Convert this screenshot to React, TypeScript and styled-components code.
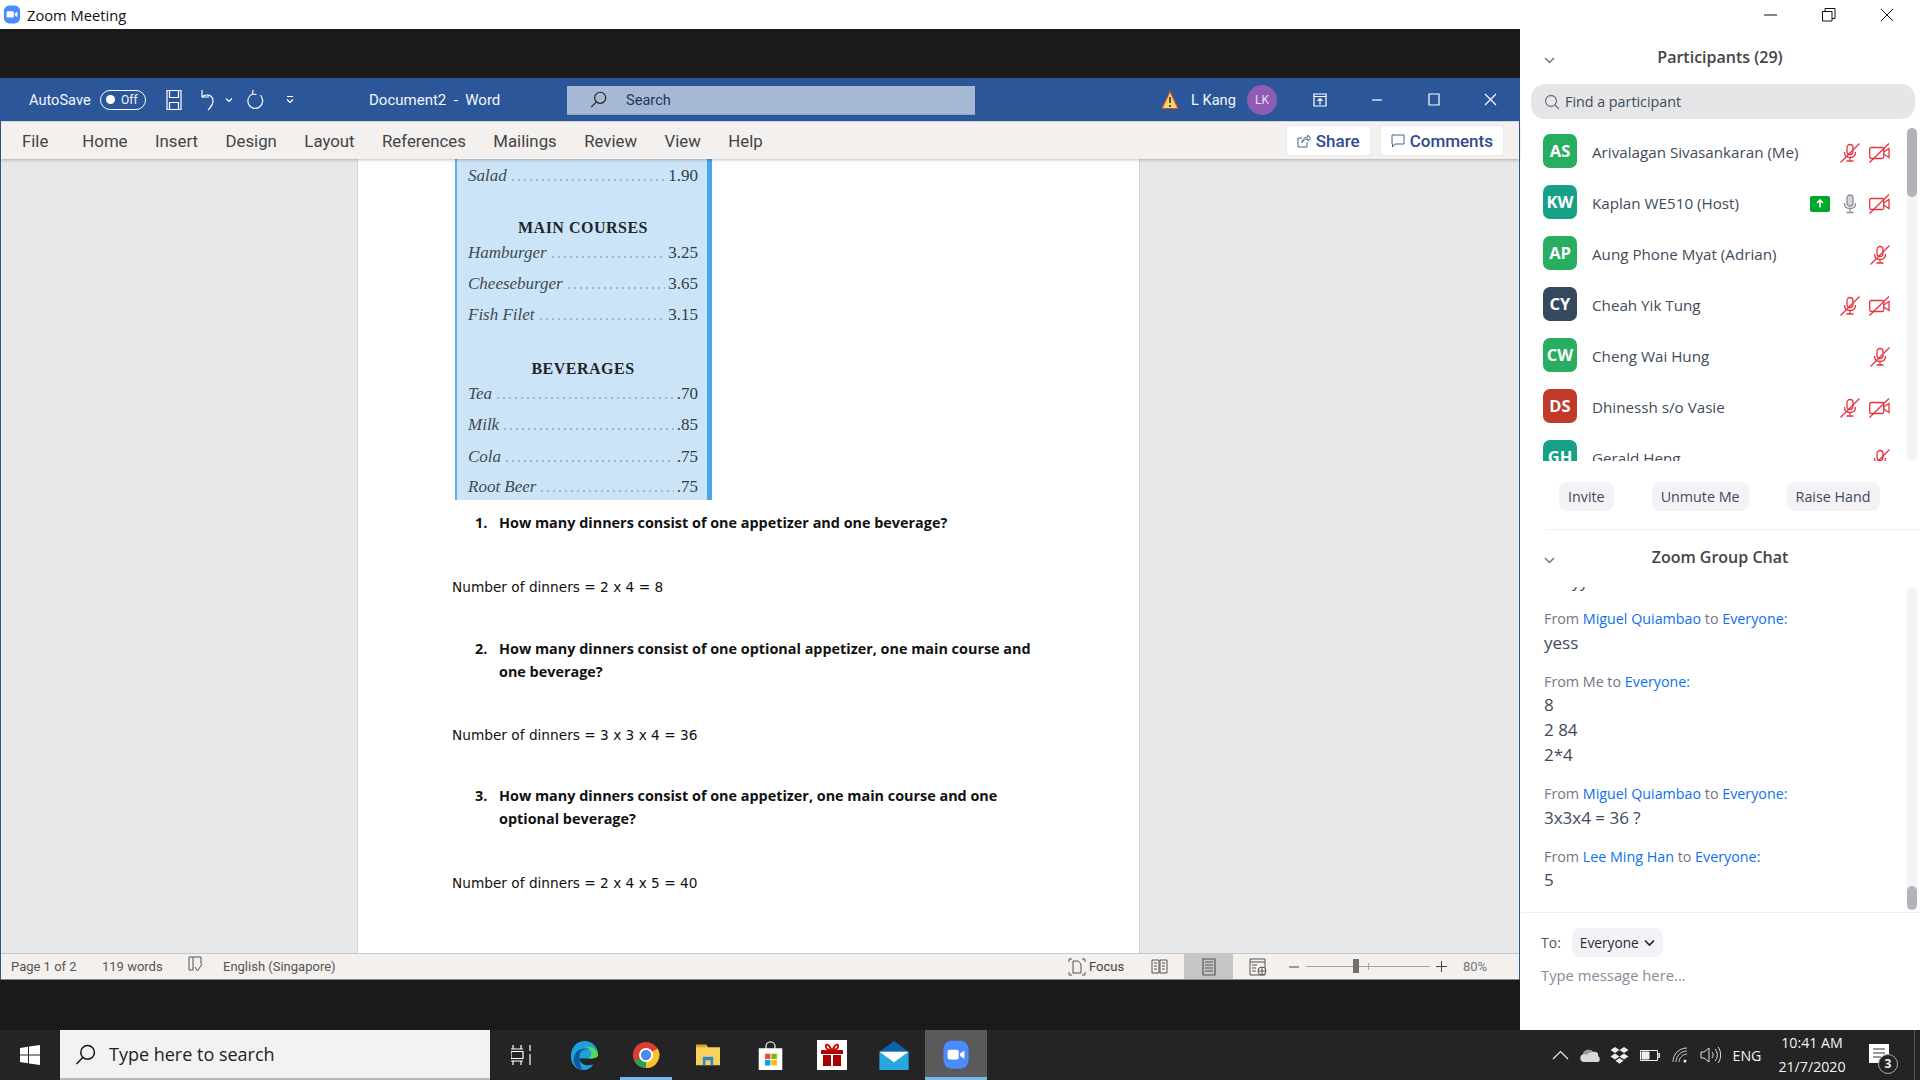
import React from 'react';
import styled, { createGlobalStyle } from 'styled-components';

const GlobalStyle = createGlobalStyle`
  html, body {
    margin: 0;
    padding: 0;
    background: #1a1a1a;
  }
  * { box-sizing: border-box; }
`;

const UI_FONT = `"Open Sans", "Noto Sans", sans-serif`;
const WORD_FONT = `"Roboto", "Open Sans", sans-serif`;
const DOC_FONT = `"DejaVu Sans", Verdana, sans-serif`;
const DOC_BOLD_FONT = `"Open Sans", "Noto Sans", sans-serif`;
const BOOK_FONT = `"Liberation Serif", "Times New Roman", serif`;

const participants = [
  { id: 'AS', name: 'Arivalagan Sivasankaran (Me)', color: '#27ae60', share: false, micOn: false, cam: true },
  { id: 'KW', name: 'Kaplan WE510 (Host)', color: '#16a085', share: true, micOn: true, cam: true },
  { id: 'AP', name: 'Aung Phone Myat (Adrian)', color: '#27ae60', share: false, micOn: false, cam: false },
  { id: 'CY', name: 'Cheah Yik Tung', color: '#34495e', share: false, micOn: false, cam: true },
  { id: 'CW', name: 'Cheng Wai Hung', color: '#27ae60', share: false, micOn: false, cam: false },
  { id: 'DS', name: 'Dhinessh s/o Vasie', color: '#c0392b', share: false, micOn: false, cam: true },
  { id: 'GH', name: 'Gerald Heng', color: '#16a085', share: false, micOn: false, cam: false },
];

const menuTabs = ['File', 'Home', 'Insert', 'Design', 'Layout', 'References', 'Mailings', 'Review', 'View', 'Help'];

const Screen = styled.div`
  width: 1920px;
  height: 1080px;
  display: flex;
  flex-direction: column;
  overflow: hidden;
  background: #1a1a1a;
`;

const TitleBar = styled.header`
  height: 29px;
  background: #fff;
  display: flex;
  align-items: center;
  justify-content: space-between;
  padding-left: 3px;
  flex: none;
`;

const TitleLeft = styled.div`
  display: flex;
  align-items: center;
  gap: 6px;
  font: 14.7px ${UI_FONT};
  color: #111;
`;

const WindowButtons = styled.div`
  display: flex;
  align-items: center;
  height: 29px;
  padding-right: 4px;
`;

const WindowButton = styled.span`
  width: 58px;
  height: 29px;
  display: flex;
  align-items: center;
  justify-content: center;
`;

const Body = styled.div`
  flex: 1;
  display: flex;
  min-height: 0;
`;

const Stage = styled.main`
  width: 1520px;
  padding-top: 49px;
  padding-bottom: 50px;
  background: #1a1a1a;
  display: flex;
  flex-direction: column;
`;

const WordWindow = styled.section`
  height: 902px;
  display: flex;
  flex-direction: column;
  border-left: 1px solid #2b579a;
  border-right: 1px solid #2b579a;
`;

const WordTitle = styled.div`
  height: 43px;
  background: #2b579a;
  color: #f4f6fa;
  display: flex;
  align-items: center;
  font: 14.6px ${WORD_FONT};
  padding-left: 28px;
  flex: none;
`;

const AutoSave = styled.span`
  width: 71px;
`;

const Toggle = styled.span`
  width: 46px;
  height: 20px;
  border: 1px solid #fff;
  border-radius: 10px;
  display: flex;
  align-items: center;
  padding-left: 5px;
  gap: 6px;
  font-size: 12px;
  margin-right: 20px;
  &::before {
    content: '';
    width: 9px;
    height: 9px;
    border-radius: 50%;
    background: #fff;
  }
`;

const QuickIcon = styled.span<{ $w: number }>`
  width: ${(p) => p.$w}px;
  height: 30px;
  display: flex;
  align-items: center;
  flex: none;
`;

const DocName = styled.span`
  margin-left: 74px;
  width: 198px;
  font-size: 15px;
  white-space: pre;
`;

const WordSearch = styled.div`
  width: 408px;
  height: 29px;
  margin-top: 1px;
  background: #a5b8d4;
  border-bottom: 1px solid #8ea6c8;
  color: #26375a;
  display: flex;
  align-items: center;
  gap: 19px;
  padding-left: 23px;
`;

const UserArea = styled.div`
  margin-left: auto;
  display: flex;
  align-items: center;
  height: 100%;
`;

const UserName = styled.span`
  margin-left: 12px;
  width: 46px;
  white-space: nowrap;
`;

const UserBadge = styled.span`
  margin: 0 14px 0 10px;
  width: 30px;
  height: 30px;
  border-radius: 50%;
  background: #8e5bb5;
  color: #e8def0;
  font-size: 12px;
  display: flex;
  align-items: center;
  justify-content: center;
`;

const WordControl = styled.span`
  width: 57px;
  height: 43px;
  display: flex;
  align-items: center;
  justify-content: center;
`;

const Ribbon = styled.nav`
  height: 38px;
  background: #f3f0ee;
  border-top: 1px solid #d0d4dc;
  display: flex;
  align-items: center;
  padding-left: 21px;
  box-shadow: 0 1px 3px rgba(0, 0, 0, 0.25);
  position: relative;
  z-index: 1;
  flex: none;
`;

const Tab = styled.span`
  font: 16.8px ${WORD_FONT};
  color: #444;
  margin-right: 27.5px;
  &:first-child {
    margin-right: 34px;
  }
`;

const RibbonActions = styled.div`
  margin-left: auto;
  display: flex;
  gap: 11px;
  padding-right: 16px;
`;

const RibbonButton = styled.span`
  height: 29px;
  background: #fff;
  border-radius: 2px;
  box-shadow: 0 0 1px rgba(0, 0, 0, 0.25);
  color: #2f4a8f;
  font: 500 17px ${WORD_FONT};
  display: flex;
  align-items: center;
  gap: 5px;
  padding: 0 10px;
`;

const Canvas = styled.div`
  flex: 1;
  min-height: 0;
  background: #e6e7e9;
  display: flex;
  justify-content: flex-start;
  padding-left: 356px;
`;

const Page = styled.article`
  width: 783px;
  height: 100%;
  background: #fff;
  border-left: 1px solid #d5d5d5;
  border-right: 1px solid #d5d5d5;
  padding-left: 94px;
  overflow: hidden;
`;

const MenuCard = styled.div`
  width: 257px;
  height: 341px;
  margin-left: 3px;
  background: #cce4f7;
  border-left: 2px solid #62ade8;
  border-right: 5px solid #4aa5e8;
  padding: 0 9px 0 11px;
  display: flex;
  flex-direction: column;
`;

const MenuRow = styled.div<{ $top: number }>`
  display: flex;
  align-items: baseline;
  margin-top: ${(p) => p.$top}px;
  height: 20px;
  line-height: 20px;
  font: italic 17px ${BOOK_FONT};
  color: #3f4a55;
`;

const Leader = styled.span`
  flex: 1;
  margin: 0 3px;
  height: 2px;
  background-image: radial-gradient(circle, #a5b4c2 0.7px, transparent 1px);
  background-size: 6px 2px;
  background-repeat: repeat-x;
`;

const Price = styled.span`
  font-style: normal;
  color: #333c45;
`;

const MenuHeading = styled.div<{ $top: number }>`
  margin-top: ${(p) => p.$top}px;
  height: 20px;
  line-height: 20px;
  text-align: center;
  font: bold 16px ${BOOK_FONT};
  letter-spacing: 0.5px;
  color: #22262b;
`;

const Question = styled.div<{ $top: number }>`
  width: 580px;
  margin-top: ${(p) => p.$top}px;
  padding-left: 47px;
  position: relative;
  font: 700 14.4px/23px ${DOC_BOLD_FONT};
  color: #111;
`;

const QuestionNumber = styled.span`
  position: absolute;
  left: 23px;
  top: 0;
`;

const Answer = styled.div<{ $top: number }>`
  margin-top: ${(p) => p.$top}px;
  font: 13.7px/23px ${DOC_FONT};
  color: #111;
`;

const StatusBar = styled.footer`
  height: 27px;
  background: #f3f0ee;
  border-top: 1px solid #c8c8c8;
  border-bottom: 1px solid #888;
  display: flex;
  align-items: center;
  padding-left: 10px;
  font: 13px ${WORD_FONT};
  color: #555;
  flex: none;
`;

const StatusText = styled.span<{ $w: number }>`
  width: ${(p) => p.$w}px;
  white-space: nowrap;
`;

const StatusRight = styled.div`
  margin-left: auto;
  display: flex;
  align-items: center;
  height: 100%;
`;

const FocusGroup = styled.span`
  display: flex;
  align-items: center;
  gap: 3px;
  width: 67px;
  color: #444;
`;

const ViewButton = styled.span<{ $active?: boolean }>`
  width: 49px;
  height: 100%;
  display: flex;
  align-items: center;
  justify-content: center;
  background: ${(p) => (p.$active ? '#c8c6c4' : 'transparent')};
`;

const ZoomMinus = styled.svg`
  margin-left: 6px;
`;

const ZoomSlider = styled.span`
  width: 124px;
  height: 1px;
  margin: 0 6px;
  background: #a5a5a5;
  position: relative;
`;

const ZoomThumb = styled.span`
  position: absolute;
  left: 47px;
  top: -7px;
  width: 6px;
  height: 14px;
  background: #707070;
`;

const ZoomTick = styled.span`
  position: absolute;
  left: 62px;
  top: -3px;
  width: 1px;
  height: 7px;
  background: #a5a5a5;
`;

const ZoomValue = styled.span`
  width: 44px;
  text-align: center;
  margin-left: 6px;
  margin-right: 22px;
  color: #777;
`;

const Panel = styled.aside`
  width: 400px;
  background: #fff;
  display: flex;
  flex-direction: column;
  font-family: ${UI_FONT};
`;

const SectionHead = styled.div<{ $h: number; $gap: number }>`
  height: ${(p) => p.$h}px;
  margin-bottom: ${(p) => p.$gap}px;
  flex: none;
  position: relative;
  display: flex;
  align-items: center;
  justify-content: center;
  font-weight: 600;
  font-size: 16px;
  color: #444;
`;

const HeadChevron = styled.span`
  position: absolute;
  left: 23px;
  top: 50%;
  margin-top: -7px;
  height: 14px;
`;

const FindBox = styled.div`
  height: 35px;
  flex: none;
  margin: 0 5px 0 11px;
  background: #e6e6e8;
  border-radius: 14px;
  display: flex;
  align-items: center;
  gap: 5px;
  padding-left: 13px;
  font-size: 14.3px;
  color: #3e4a5c;
`;

const ScrollArea = styled.div<{ $h: number }>`
  height: ${(p) => p.$h}px;
  flex: none;
  position: relative;
  overflow: hidden;
`;

const ListInner = styled.div`
  padding: 6px 0 0 23px;
`;

const Row = styled.div`
  height: 51px;
  display: flex;
  align-items: center;
  padding-right: 30px;
`;

const Avatar = styled.span<{ $bg: string }>`
  width: 34px;
  height: 34px;
  border-radius: 7px;
  background: ${(p) => p.$bg};
  color: #fff;
  font-weight: 700;
  font-size: 16.5px;
  display: flex;
  align-items: center;
  justify-content: center;
  flex: none;
`;

const PersonName = styled.span`
  margin-left: 15px;
  padding-top: 3px;
  font-size: 15.2px;
  color: #414b5a;
  white-space: nowrap;
`;

const RowIcons = styled.span`
  margin-left: auto;
  padding-top: 4px;
  display: flex;
  align-items: center;
  gap: 9px;
`;

const ShareTag = styled.span`
  width: 20px;
  height: 16px;
  margin-right: 1px;
  background: #00a82d;
  border-radius: 2px;
  display: flex;
  align-items: center;
  justify-content: center;
`;

const ScrollTrack = styled.div<{ $right: number; $top: number; $bottom: number }>`
  position: absolute;
  right: ${(p) => p.$right}px;
  top: ${(p) => p.$top}px;
  bottom: ${(p) => p.$bottom}px;
  width: 10px;
  background: #f4f4f7;
  border-radius: 5px;
`;

const ScrollThumb = styled.div<{ $top: number; $h: number }>`
  position: absolute;
  left: 0;
  top: ${(p) => p.$top}px;
  width: 10px;
  height: ${(p) => p.$h}px;
  background: #b2b2ba;
  border-radius: 5px;
`;

const ActionRow = styled.div`
  height: 68px;
  flex: none;
  display: flex;
  align-items: flex-start;
  padding: 21px 0 0 39px;
  gap: 38px;
`;

const ActionButton = styled.span`
  height: 29px;
  padding: 0 9px;
  background: #f2f2f7;
  border-radius: 8px;
  font-size: 14.3px;
  color: #3e4a5c;
  display: flex;
  align-items: center;
`;

const Divider = styled.div<{ $left: number }>`
  height: 1px;
  flex: none;
  margin-left: ${(p) => p.$left}px;
  background: #ececf2;
`;

const ChatInner = styled.div`
  padding-left: 24px;
  margin-top: -17px;
`;

const ClippedLine = styled.div`
  font-size: 16px;
  line-height: 22px;
  height: 28px;
  padding-left: 28px;
  color: #444;
`;

const ChatBlock = styled.div`
  margin-top: 9px;
  padding-bottom: 4.5px;
`;

const ChatMeta = styled.div`
  line-height: 24px;
  color: #747487;
  font-size: 14.3px;
`;

const ChatName = styled.span`
  color: #0e71eb;
`;

const ChatLine = styled.div`
  font-size: 17px;
  line-height: 25px;
  color: #3e4a5c;
  position: relative;
  top: -1.5px;
`;

const ToRow = styled.div`
  display: flex;
  align-items: center;
  gap: 11px;
  padding: 15px 0 0 21px;
  font-size: 14px;
  color: #4a5564;
`;

const ToSelect = styled.span`
  height: 29px;
  padding: 0 8px;
  background: #f2f2f7;
  border-radius: 8px;
  display: flex;
  align-items: center;
  gap: 5px;
  font-size: 13.7px;
  color: #222b3a;
`;

const Composer = styled.div`
  padding: 7px 0 0 21px;
  font-size: 14.8px;
  line-height: 22px;
  color: #8a8a98;
`;

const Taskbar = styled.footer`
  height: 50px;
  flex: none;
  background: #242424;
  display: flex;
  align-items: center;
`;

const StartButton = styled.span`
  width: 60px;
  height: 50px;
  display: flex;
  align-items: center;
  justify-content: center;
`;

const TaskSearch = styled.div`
  width: 430px;
  height: 50px;
  background: #f2f2f2;
  border-bottom: 2px solid #b8b8b8;
  display: flex;
  align-items: center;
  gap: 13px;
  padding-left: 15px;
  font: 18px ${UI_FONT};
  color: #222;
`;

const TaskIcon = styled.span<{ $active?: boolean; $running?: boolean; $w?: number }>`
  width: ${(p) => p.$w ?? 62}px;
  height: 50px;
  display: flex;
  align-items: center;
  justify-content: center;
  position: relative;
  background: ${(p) => (p.$active ? '#5a5a5a' : 'transparent')};
  ${(p) =>
    p.$running
      ? `&::after {
    content: '';
    position: absolute;
    left: ${p.$active ? 0 : 5}px;
    right: ${p.$active ? 0 : 5}px;
    bottom: 0;
    height: 3px;
    background: #76b9ed;
  }`
      : ''}
`;

const Tray = styled.div`
  margin-left: auto;
  display: flex;
  align-items: center;
  height: 100%;
  color: #f2f2f2;
  font: 14.2px ${UI_FONT};
`;

const TrayIcon = styled.span<{ $w: number }>`
  width: ${(p) => p.$w}px;
  height: 50px;
  display: flex;
  align-items: center;
  justify-content: center;
`;

const Clock = styled.span`
  width: 90px;
  text-align: center;
  line-height: 24px;
  white-space: nowrap;
`;

const NotifyWrap = styled.span`
  width: 57px;
  height: 50px;
  padding-left: 12px;
  display: flex;
  align-items: center;
  position: relative;
`;

const NotifyCount = styled.span`
  position: absolute;
  left: 21px;
  top: 24px;
  width: 20px;
  height: 20px;
  border-radius: 50%;
  border: 1px solid #aaa;
  background: #242424;
  color: #eee;
  font: bold 12px/18px ${UI_FONT};
  text-align: center;
`;

const ShowDesktop = styled.span`
  width: 6px;
  height: 50px;
  border-left: 1px solid #555;
`;

const ZoomGlyph = ({ size }: { size: number }) => (
  <svg width={size} height={size * 1.05} viewBox="0 0 20 21">
    <rect x="1" y="0.5" width="18" height="20" rx="6" fill="#4a8cff" />
    <rect x="4" y="7" width="8" height="7" rx="1.5" fill="#fff" />
    <path d="M13 9.5 16 7.5v6l-3-2z" fill="#fff" />
  </svg>
);

const MicOff = () => (
  <svg width="20" height="20" viewBox="0 0 20 20" fill="none" stroke="#e8333f" strokeWidth="1.3">
    <rect x="7" y="1.5" width="6" height="10" rx="3" />
    <path d="M4.5 9c0 3.5 2.4 5.5 5.5 5.5s5.5-2 5.5-5.5M10 14.5v3M6.5 18h7" />
    <path d="M0.5 19.5 19.5 0.5" />
  </svg>
);

const MicOn = () => (
  <svg width="20" height="20" viewBox="0 0 20 20" fill="none" stroke="#8b8b95" strokeWidth="1.3">
    <rect x="7" y="1" width="6" height="11" rx="3" fill="#d6d6da" />
    <path d="M4.5 9c0 3.5 2.4 5.5 5.5 5.5s5.5-2 5.5-5.5M10 14.5v3M6.5 18.5h7" />
  </svg>
);

const CamOff = () => (
  <svg width="21" height="20" viewBox="0 0 21 20" fill="none" stroke="#e8333f" strokeWidth="1.3">
    <rect x="0.7" y="4.5" width="14" height="11" rx="1.5" />
    <path d="M14.7 9 20 5.5v9L14.7 11" />
    <path d="M0.5 19.5 20 0.5" />
  </svg>
);

const Chevron = ({ color = '#6e7680' }: { color?: string }) => (
  <svg width="13" height="14" viewBox="0 0 13 14" fill="none" stroke={color} strokeWidth="1.5">
    <path d="M2 5l4.5 4.5L11 5" />
  </svg>
);

const WordIcon = ({ d, w = 20, h = 22 }: { d: string; w?: number; h?: number }) => (
  <svg width={w} height={h} viewBox={`0 0 ${w} ${h}`} fill="none" stroke="#fff" strokeWidth="1.2">
    <path d={d} />
  </svg>
);

const StatusIcon = ({ children, w = 18, h = 18 }: { children: React.ReactNode; w?: number; h?: number }) => (
  <svg width={w} height={h} viewBox={`0 0 ${w} ${h}`} fill="none" stroke="#555" strokeWidth="1">
    {children}
  </svg>
);

const SearchGlyph = ({ size, color }: { size: number; color: string }) => (
  <svg width={size} height={size} viewBox="0 0 20 20" fill="none" stroke={color} strokeWidth="1.4">
    <circle cx="12" cy="8" r="6.5" />
    <path d="M7.5 12.7 1.5 19" />
  </svg>
);

const MenuItem = ({ name, price, top }: { name: string; price: string; top: number }) => (
  <MenuRow $top={top}>
    {name}
    <Leader />
    <Price>{price}</Price>
  </MenuRow>
);

export default function App() {
  return (
    <Screen>
      <GlobalStyle />
      <TitleBar>
        <TitleLeft>
          <ZoomGlyph size={18} />
          Zoom Meeting
        </TitleLeft>
        <WindowButtons>
          <WindowButton>
            <svg width="14" height="2"><path d="M0 1h13" stroke="#111" /></svg>
          </WindowButton>
          <WindowButton>
            <svg width="14" height="14" fill="none" stroke="#111"><path d="M.5 3.5h9.5v9.5H.5zM3 3.5V.5h10v10h-3" /></svg>
          </WindowButton>
          <WindowButton>
            <svg width="14" height="14" fill="none" stroke="#111"><path d="M1 1l12 12M13 1 1 13" /></svg>
          </WindowButton>
        </WindowButtons>
      </TitleBar>
      <Body>
        <Stage>
          <WordWindow>
            <WordTitle>
              <AutoSave>AutoSave</AutoSave>
              <Toggle>Off</Toggle>
              <QuickIcon $w={34}>
                <WordIcon w={16} h={22} d="M1 1.5h14v19H1zM3.5 1.5v7h9v-7M3.5 20.5v-7h9v7" />
              </QuickIcon>
              <QuickIcon $w={25}>
                <WordIcon w={16} h={22} d="M2 1v7h7M2 8c3-3 10-3 11 3 .5 4-2 7-5 10" />
              </QuickIcon>
              <QuickIcon $w={22}>
                <WordIcon w={8} h={6} d="M1 1.5l3 3 3-3" />
              </QuickIcon>
              <QuickIcon $w={38}>
                <WordIcon w={18} h={22} d="M6 1l-.5 4 4 .5M5.5 5C1.5 7 0 11 1.5 15s7 6 11 3 4-8 1-12" />
              </QuickIcon>
              <QuickIcon $w={10}>
                <WordIcon w={10} h={10} d="M2 1.5h6M2 4.5l3 3 3-3" />
              </QuickIcon>
              <DocName>Document2  -  Word</DocName>
              <WordSearch>
                <SearchGlyph size={17} color="#222" />
                Search
              </WordSearch>
              <UserArea>
                <svg width="18" height="20" viewBox="0 0 18 20">
                  <path d="M9 1.5 17 18.5H1z" fill="#f8d66a" stroke="#c3503a" strokeWidth="1.2" />
                  <path d="M9 7v6M9 15v2" stroke="#222" strokeWidth="1.5" />
                </svg>
                <UserName>L Kang</UserName>
                <UserBadge>LK</UserBadge>
                <WordControl>
                  <WordIcon w={14} h={14} d="M1 1h12v12H1zM1 3.5h12M7 11.5v-6M4.5 8 7 5.5 9.5 8" />
                </WordControl>
                <WordControl>
                  <WordIcon w={12} h={2} d="M1 1h10" />
                </WordControl>
                <WordControl>
                  <WordIcon w={12} h={13} d="M1 1h10v11H1z" />
                </WordControl>
                <WordControl>
                  <WordIcon w={13} h={13} d="M1 1l11 11M12 1 1 12" />
                </WordControl>
              </UserArea>
            </WordTitle>
            <Ribbon>
              {menuTabs.map((t) => (
                <Tab key={t}>{t}</Tab>
              ))}
              <RibbonActions>
                <RibbonButton>
                  <svg width="14" height="14" viewBox="0 0 14 14" fill="none" stroke="#4a6390">
                    <path d="M5 4H1v9h9V8M5 9c0-4 3-6 6-6V1l2.5 3L11 7V5C8 5 6 6 5 9z" />
                  </svg>
                  Share
                </RibbonButton>
                <RibbonButton>
                  <svg width="14" height="14" viewBox="0 0 14 14" fill="none" stroke="#4a6390">
                    <path d="M1 1h12v9H4l-2.5 3v-3H1z" />
                  </svg>
                  Comments
                </RibbonButton>
              </RibbonActions>
            </Ribbon>
            <Canvas>
              <Page>
                <MenuCard>
                  <MenuItem name="Salad" price="1.90" top={7} />
                  <MenuHeading $top={33}>MAIN COURSES</MenuHeading>
                  <MenuItem name="Hamburger" price="3.25" top={4} />
                  <MenuItem name="Cheeseburger" price="3.65" top={11} />
                  <MenuItem name="Fish Filet" price="3.15" top={11} />
                  <MenuHeading $top={35}>BEVERAGES</MenuHeading>
                  <MenuItem name="Tea" price=".70" top={4} />
                  <MenuItem name="Milk" price=".85" top={11} />
                  <MenuItem name="Cola" price=".75" top={12} />
                  <MenuItem name="Root Beer" price=".75" top={10} />
                </MenuCard>
                <Question $top={11}>
                  <QuestionNumber>1.</QuestionNumber>
                  How many dinners consist of one appetizer and one beverage?
                </Question>
                <Answer $top={42}>Number of dinners = 2 x 4 = 8</Answer>
                <Question $top={38}>
                  <QuestionNumber>2.</QuestionNumber>
                  How many dinners consist of one optional appetizer, one main course and one beverage?
                </Question>
                <Answer $top={41}>Number of dinners = 3 x 3 x 4 = 36</Answer>
                <Question $top={37}>
                  <QuestionNumber>3.</QuestionNumber>
                  How many dinners consist of one appetizer, one main course and one optional beverage?
                </Question>
                <Answer $top={42}>Number of dinners = 2 x 4 x 5 = 40</Answer>
              </Page>
            </Canvas>
            <StatusBar>
              <StatusText $w={91}>Page 1 of 2</StatusText>
              <StatusText $w={85}>119 words</StatusText>
              <StatusText $w={36}>
                <StatusIcon>
                  <path d="M2 1h4v13H2zM6 1h8v7M8 11l2.5 4L15 8" />
                </StatusIcon>
              </StatusText>
              <StatusText $w={150}>English (Singapore)</StatusText>
              <StatusRight>
                <FocusGroup>
                  <StatusIcon>
                    <path d="M1 4V1h3M14 1h3v3M1 14v3h3M14 17h3v-3M5 3h5l3 3v9H5z" />
                  </StatusIcon>
                  Focus
                </FocusGroup>
                <ViewButton>
                  <StatusIcon>
                    <path d="M1 2h7v13H1zM9 2h7v13H9zM3 5h3M3 8h3M3 11h3M11 5h3M11 8h3M11 11h3" />
                  </StatusIcon>
                </ViewButton>
                <ViewButton $active>
                  <StatusIcon>
                    <path d="M3 1h12v16H3zM5 4h8M5 7h8M5 10h8M5 13h8" strokeWidth="1.2" />
                  </StatusIcon>
                </ViewButton>
                <ViewButton>
                  <StatusIcon>
                    <path d="M1 1h15v16H1zM1 4h15M3 7h5M3 10h4M3 13h4" />
                    <circle cx="13" cy="13" r="4" fill="#f3f0ee" />
                    <path d="M9 13h8M13 9v8" />
                  </StatusIcon>
                </ViewButton>
                <ZoomMinus width="12" height="2"><path d="M1 1h10" stroke="#444" /></ZoomMinus>
                <ZoomSlider>
                  <ZoomThumb />
                  <ZoomTick />
                </ZoomSlider>
                <svg width="11" height="11"><path d="M0 5.5h11M5.5 0v11" stroke="#444" /></svg>
                <ZoomValue>80%</ZoomValue>
              </StatusRight>
            </StatusBar>
          </WordWindow>
        </Stage>
        <Panel>
          <SectionHead $h={55} $gap={0}>
            <HeadChevron><Chevron /></HeadChevron>
            Participants (29)
          </SectionHead>
          <FindBox>
            <svg width="16" height="16" viewBox="0 0 16 16" fill="none" stroke="#6e7680" strokeWidth="1.3">
              <circle cx="7" cy="7" r="5.5" />
              <path d="M11 11l4 4" />
            </svg>
            Find a participant
          </FindBox>
          <ScrollArea $h={342}>
            <ListInner>
              {participants.map((p) => (
                <Row key={p.id}>
                  <Avatar $bg={p.color}>{p.id}</Avatar>
                  <PersonName>{p.name}</PersonName>
                  <RowIcons>
                    {p.share && (
                      <ShareTag>
                        <svg width="8" height="9" viewBox="0 0 8 9" fill="none" stroke="#fff" strokeWidth="1.6">
                          <path d="M4 8.5V1.5M1 4l3-3 3 3" />
                        </svg>
                      </ShareTag>
                    )}
                    {p.micOn ? <MicOn /> : <MicOff />}
                    {p.cam && <CamOff />}
                  </RowIcons>
                </Row>
              ))}
            </ListInner>
            <ScrollTrack $right={3} $top={9} $bottom={0}>
              <ScrollThumb $top={0} $h={69} />
            </ScrollTrack>
          </ScrollArea>
          <ActionRow>
            <ActionButton>Invite</ActionButton>
            <ActionButton>Unmute Me</ActionButton>
            <ActionButton>Raise Hand</ActionButton>
          </ActionRow>
          <Divider $left={26} />
          <SectionHead $h={53} $gap={4}>
            <HeadChevron><Chevron /></HeadChevron>
            Zoom Group Chat
          </SectionHead>
          <ScrollArea $h={325}>
            <ChatInner>
              <ClippedLine>yy</ClippedLine>
              <ChatBlock>
                <ChatMeta>From <ChatName>Miguel Quiambao</ChatName> to <ChatName>Everyone:</ChatName></ChatMeta>
                <ChatLine>yess</ChatLine>
              </ChatBlock>
              <ChatBlock>
                <ChatMeta>From Me to <ChatName>Everyone:</ChatName></ChatMeta>
                <ChatLine>8</ChatLine>
                <ChatLine>2 84</ChatLine>
                <ChatLine>2*4</ChatLine>
              </ChatBlock>
              <ChatBlock>
                <ChatMeta>From <ChatName>Miguel Quiambao</ChatName> to <ChatName>Everyone:</ChatName></ChatMeta>
                <ChatLine>3x3x4 = 36 ?</ChatLine>
              </ChatBlock>
              <ChatBlock>
                <ChatMeta>From <ChatName>Lee Ming Han</ChatName> to <ChatName>Everyone:</ChatName></ChatMeta>
                <ChatLine>5</ChatLine>
              </ChatBlock>
            </ChatInner>
            <ScrollTrack $right={3} $top={0} $bottom={2}>
              <ScrollThumb $top={299} $h={24} />
            </ScrollTrack>
          </ScrollArea>
          <Divider $left={1} />
          <ToRow>
            To:
            <ToSelect>
              Everyone
              <svg width="11" height="8" viewBox="0 0 11 8" fill="none" stroke="#222" strokeWidth="1.6"><path d="M1 1.5l4.5 4.5L10 1.5" /></svg>
            </ToSelect>
          </ToRow>
          <Composer>Type message here...</Composer>
        </Panel>
      </Body>
      <Taskbar>
        <StartButton>
          <svg width="20" height="20" viewBox="0 0 20 20" fill="#fff">
            <path d="M0 3l8-1.2V9.5H0zM9 1.6 20 0v9.5H9zM0 10.5h8v7.7L0 17zM9 10.5h11V20L9 18.4z" />
          </svg>
        </StartButton>
        <TaskSearch>
          <SearchGlyph size={21} color="#111" />
          Type here to search
        </TaskSearch>
        <TaskIcon $w={63}>
          <svg width="21" height="20" viewBox="0 0 21 20" fill="none" stroke="#fff" strokeWidth="1.2">
            <path d="M0 4h12M2 0v4M10 0v4M0 6.5h12v7H0zM0 16h12M2 16v4M10 16v4M19 0v6M19 9v11" />
          </svg>
        </TaskIcon>
        <TaskIcon>
          <svg width="31" height="31" viewBox="0 0 32 32">
            <path d="M2 15C3 6 9 1 16 1c8 0 14 6 14 14 0 2-2 4-6 4H11c0 6 8 9 14 6-3 5-7 6-10 6C7 31 1 24 2 15z" fill="#1ea0d8" />
            <path d="M11 19c-1-7 4-11 10-9-6-3-14 0-16 8-1 6 3 12 9 13-2-3-3-7-3-12z" fill="#0c59a4" />
            <path d="M30 15c0 2-2 4-6 4h-4c2-1 3-3 3-5 0-4-4-7-7-7 7-1 13 2 14 8z" fill="#58d65b" />
          </svg>
        </TaskIcon>
        <TaskIcon $running>
          <svg width="28" height="28" viewBox="0 0 30 30">
            <circle cx="15" cy="15" r="14" fill="#dc3e31" />
            <path d="M15 15 2.5 21.5A14 14 0 0 0 15 29z" fill="#2ba24c" />
            <path d="M15 15 15 29A14 14 0 0 0 27.5 8z" fill="#fbc02d" />
            <circle cx="15" cy="15" r="6.5" fill="#4c8bf5" stroke="#fff" strokeWidth="2" />
          </svg>
        </TaskIcon>
        <TaskIcon>
          <svg width="28" height="24" viewBox="0 0 30 28">
            <path d="M1 2h12l2 3h14v21H1z" fill="#f7d25c" />
            <path d="M1 2h12l2 3H1z" fill="#e3a21a" />
            <path d="M9 16h12v10h-3v-6h-6v6H9z" fill="#2e86d4" />
          </svg>
        </TaskIcon>
        <TaskIcon>
          <svg width="29" height="29" viewBox="0 0 28 32">
            <path d="M9 9V6a5 5 0 0 1 10 0v3" fill="none" stroke="#ddd" strokeWidth="1.5" />
            <path d="M1 8h26v24H1z" fill="#fff" />
            <path d="M8 14h6v6H8z" fill="#e8502f" />
            <path d="M15 14h6v6h-6z" fill="#7fba00" />
            <path d="M8 21h6v6H8z" fill="#00a4ef" />
            <path d="M15 21h6v6h-6z" fill="#ffb900" />
          </svg>
        </TaskIcon>
        <TaskIcon>
          <svg width="30" height="30" viewBox="0 0 30 30">
            <path d="M0 0h30v30H0z" fill="#fff" />
            <path d="M4 10h22v4H4zM6 15h8v11H6zM16 15h8v11h-8z" fill="#a80000" />
            <path d="M14 9C11 3 8 4 9 7s3 3 5 3zM16 9c3-6 6-5 5-2s-3 3-5 3z" fill="none" stroke="#c00" strokeWidth="1.8" />
          </svg>
        </TaskIcon>
        <TaskIcon>
          <svg width="30" height="29" viewBox="0 0 30 30">
            <path d="M15 0 30 11v19H0V11z" fill="#0c64ad" />
            <path d="M0 11h30v19H0z" fill="#29a8e0" />
            <path d="M0 11h30L15 22z" fill="#fff" />
          </svg>
        </TaskIcon>
        <TaskIcon $active $running $w={62}>
          <ZoomGlyph size={28} />
        </TaskIcon>
        <Tray>
          <TrayIcon $w={30}>
            <svg width="17" height="10" fill="none" stroke="#eee" strokeWidth="1.2"><path d="M1 9l7.5-7.5L16 9" /></svg>
          </TrayIcon>
          <TrayIcon $w={30}>
            <svg width="21" height="14" viewBox="0 0 21 14">
              <path d="M4 14a4 4 0 0 1-1-7.8C4 2 10 0 13 4c4-1 6 2 5 4 2 1 3 6-1 6z" fill="#d8d8d8" />
              <path d="M3 6.2C4 2 10 0 13 4c-3 0-5 1-6 3-1-1-3-1-4-.8z" fill="#9a9a9a" />
            </svg>
          </TrayIcon>
          <TrayIcon $w={28}>
            <svg width="19" height="17" viewBox="0 0 19 17" fill="#eee">
              <path d="M5 0l4.5 3L5 6 .5 3zM14 0l4.5 3L14 6 9.5 3zM5 6.5l4.5 3-4.5 3-4.5-3zM14 6.5l4.5 3-4.5 3-4.5-3zM9.5 11l4 2.7-4 3-4-3z" />
            </svg>
          </TrayIcon>
          <TrayIcon $w={34}>
            <svg width="20" height="11" fill="none" stroke="#eee"><path d="M.5.5h17v10H.5zM18 3.5h1.5v4H18z" /><path d="M2 2h7v7H2z" fill="#eee" /></svg>
          </TrayIcon>
          <TrayIcon $w={26}>
            <svg width="17" height="16" viewBox="0 0 17 16" fill="none" stroke="#ccc">
              <path d="M1 15C1 7 7 1 15 1M4 15c0-6 5-11 11-11M7 15c0-4 4-8 8-8" />
              <circle cx="13" cy="14" r="1.5" fill="#eee" stroke="none" />
            </svg>
          </TrayIcon>
          <TrayIcon $w={34}>
            <svg width="21" height="18" viewBox="0 0 21 18" fill="none" stroke="#ddd">
              <path d="M1 6h3l5-4v14l-5-4H1zM12 6c1.5 2 1.5 4 0 6M15 3c3 3 3 9 0 12M18 1c3.5 4 3.5 12 0 16" />
            </svg>
          </TrayIcon>
          <TrayIcon $w={40}>ENG</TrayIcon>
          <Clock>
            10:41 AM
            <br />
            21/7/2020
          </Clock>
          <NotifyWrap>
            <svg width="20" height="22" viewBox="0 0 20 22">
              <path d="M0 0h20v19H0z" fill="#fff" />
              <path d="M4 5h12M4 9h12M4 13h8" stroke="#333" />
            </svg>
            <NotifyCount>3</NotifyCount>
          </NotifyWrap>
          <ShowDesktop />
        </Tray>
      </Taskbar>
    </Screen>
  );
}
